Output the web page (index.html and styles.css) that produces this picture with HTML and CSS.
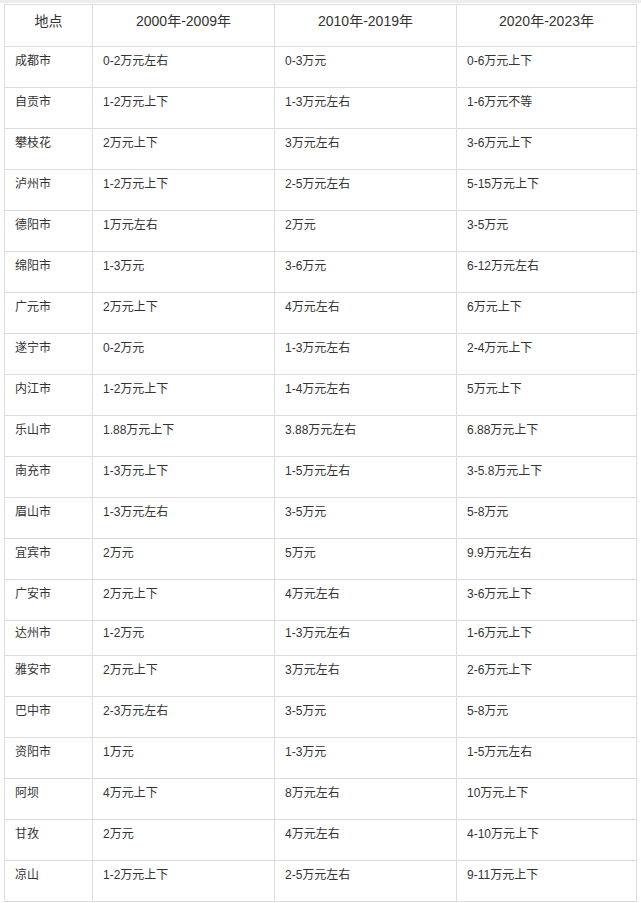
FILE: index.html
```html
<!DOCTYPE html>
<html lang="zh">
<head>
<meta charset="utf-8">
<title>四川各地彩礼</title>
<link rel="stylesheet" href="styles.css">
</head>
<body>
<div class="topbar"></div>
<table class="data">
  <colgroup>
    <col class="c1"><col class="c2"><col class="c3"><col class="c4">
  </colgroup>
  <thead>
    <tr><th>地点</th><th>2000年-2009年</th><th>2010年-2019年</th><th>2020年-2023年</th></tr>
  </thead>
  <tbody>
    <tr><td>成都市</td><td>0-2万元左右</td><td>0-3万元</td><td>0-6万元上下</td></tr>
    <tr><td>自贡市</td><td>1-2万元上下</td><td>1-3万元左右</td><td>1-6万元不等</td></tr>
    <tr><td>攀枝花</td><td>2万元上下</td><td>3万元左右</td><td>3-6万元上下</td></tr>
    <tr><td>泸州市</td><td>1-2万元上下</td><td>2-5万元左右</td><td>5-15万元上下</td></tr>
    <tr><td>德阳市</td><td>1万元左右</td><td>2万元</td><td>3-5万元</td></tr>
    <tr><td>绵阳市</td><td>1-3万元</td><td>3-6万元</td><td>6-12万元左右</td></tr>
    <tr><td>广元市</td><td>2万元上下</td><td>4万元左右</td><td>6万元上下</td></tr>
    <tr><td>遂宁市</td><td>0-2万元</td><td>1-3万元左右</td><td>2-4万元上下</td></tr>
    <tr><td>内江市</td><td>1-2万元上下</td><td>1-4万元左右</td><td>5万元上下</td></tr>
    <tr><td>乐山市</td><td>1.88万元上下</td><td>3.88万元左右</td><td>6.88万元上下</td></tr>
    <tr><td>南充市</td><td>1-3万元上下</td><td>1-5万元左右</td><td>3-5.8万元上下</td></tr>
    <tr><td>眉山市</td><td>1-3万元左右</td><td>3-5万元</td><td>5-8万元</td></tr>
    <tr><td>宜宾市</td><td>2万元</td><td>5万元</td><td>9.9万元左右</td></tr>
    <tr><td>广安市</td><td>2万元上下</td><td>4万元左右</td><td>3-6万元上下</td></tr>
    <tr class="short"><td>达州市</td><td>1-2万元</td><td>1-3万元左右</td><td>1-6万元上下</td></tr>
    <tr><td>雅安市</td><td>2万元上下</td><td>3万元左右</td><td>2-6万元上下</td></tr>
    <tr><td>巴中市</td><td>2-3万元左右</td><td>3-5万元</td><td>5-8万元</td></tr>
    <tr><td>资阳市</td><td>1万元</td><td>1-3万元</td><td>1-5万元左右</td></tr>
    <tr><td>阿坝</td><td>4万元上下</td><td>8万元左右</td><td>10万元上下</td></tr>
    <tr><td>甘孜</td><td>2万元</td><td>4万元左右</td><td>4-10万元上下</td></tr>
    <tr><td>凉山</td><td>1-2万元上下</td><td>2-5万元左右</td><td>9-11万元上下</td></tr>
  </tbody>
</table>
</body>
</html>
```
FILE: styles.css
```css
html, body {
  margin: 0;
  padding: 0;
  background: #ffffff;
}
body {
  font-family: "Liberation Sans", "Noto Sans CJK SC", sans-serif;
  color: #333333;
}
.topbar {
  height: 3px;
  background: #ececec;
  margin-bottom: 1px;
}
.data {
  margin-left: 4px;
  width: 632px;
  border-collapse: collapse;
  table-layout: fixed;
}
.c1 { width: 88px; }
.c2 { width: 182px; }
.c3 { width: 182px; }
.c4 { width: 180px; }
.data th,
.data td {
  border: 1px solid #dcdcdc;
  vertical-align: top;
  text-align: left;
}
.data th {
  height: 42px;
  box-sizing: border-box;
  padding: 6px 10px 0;
  font-size: 14px;
  line-height: 20px;
  font-weight: normal;
  text-align: center;
}
.data td {
  height: 41px;
  box-sizing: border-box;
  padding: 5px 10px 0;
  font-size: 12px;
  line-height: 18px;
}
.data tr.short td {
  height: 35px;
  padding-top: 3px;
}
```
